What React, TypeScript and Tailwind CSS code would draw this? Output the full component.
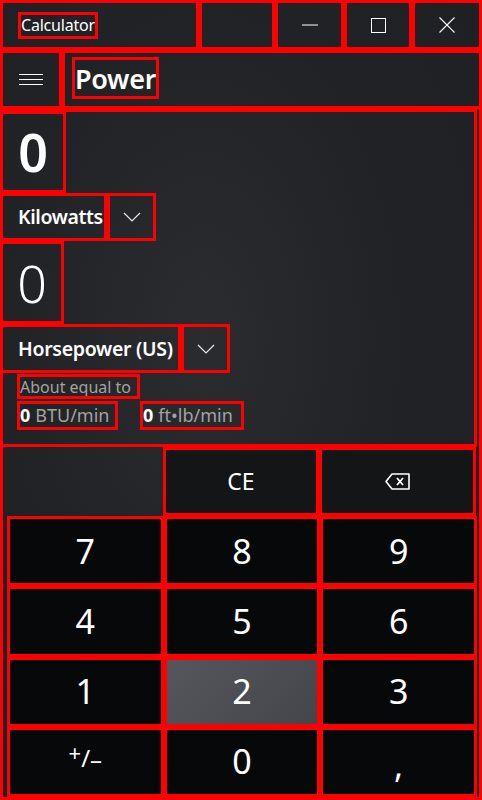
import React from "react";

// red debug-style frame drawn inside each box
const R = "outline-3 outline-[#ff0000] -outline-offset-3";

function Chevron() {
  return (
    <svg width="18" height="10" viewBox="0 0 18 10" fill="none">
      <polyline points="1,1 9,9 17,1" stroke="#e8e8e8" strokeWidth="1.2" />
    </svg>
  );
}

function Key({ label, hot }: { label: React.ReactNode; hot?: boolean }) {
  return (
    <div
      className={`${R} flex items-center justify-center text-[34px] text-white ${
        hot
          ? "bg-[linear-gradient(135deg,#56575c,#44454a)]"
          : "bg-[#070809]"
      }`}
    >
      {label}
    </div>
  );
}

export default function App() {
  return (
    <div
      className={`${R} w-[482px] h-[800px] flex flex-col overflow-hidden text-white font-['Noto_Sans',sans-serif] bg-[radial-gradient(ellipse_at_42%_42%,#2b2c30_0%,#222327_45%,#1e1f22_100%)]`}
    >
      {/* title bar */}
      <div className="h-[50px] flex shrink-0">
        <div className={`${R} w-[199px] flex items-center pl-[18px]`}>
          <span className={`${R} h-[27px] px-[3px] flex items-center text-[16px] tracking-[-0.2px] leading-none`}>
            Calculator
          </span>
        </div>
        <div className={`${R} w-[76px]`} />
        <div className={`${R} w-[69px] flex items-center justify-center`}>
          <svg width="16" height="2" viewBox="0 0 16 2">
            <line x1="0" y1="1" x2="16" y2="1" stroke="#fff" strokeWidth="1" />
          </svg>
        </div>
        <div className={`${R} w-[68px] flex items-center justify-center`}>
          <svg width="15" height="15" viewBox="0 0 15 15" fill="none">
            <rect x="0.5" y="0.5" width="14" height="14" stroke="#fff" strokeWidth="1" />
          </svg>
        </div>
        <div className={`${R} flex-1 flex items-center justify-center`}>
          <svg width="16" height="16" viewBox="0 0 16 16" fill="none">
            <path d="M0.5 0.5 L15.5 15.5 M15.5 0.5 L0.5 15.5" stroke="#fff" strokeWidth="1.1" />
          </svg>
        </div>
      </div>

      {/* header */}
      <div className="h-[59px] flex shrink-0">
        <div className={`${R} w-[62px] flex items-center justify-center`}>
          <svg width="24" height="11" viewBox="0 0 24 11">
            <path d="M0 0.5H24M0 5.5H24M0 10.5H24" stroke="#fff" strokeWidth="1" />
          </svg>
        </div>
        <div className={`${R} flex-1 pl-[10px] pt-[7px]`}>
          <span className={`${R} inline-flex items-center h-[42px] px-[3px] text-[27px] font-semibold tracking-[-0.3px] leading-none`}>
            Power
          </span>
        </div>
      </div>

      {/* converter display */}
      <div className={`${R} h-[338px] mr-[5px] pt-[2px] flex flex-col items-start shrink-0`}>
        <div className={`${R} w-[66px] h-[82px] flex items-center justify-center text-[52px] font-semibold leading-none`}>
          0
        </div>
        <div className="h-[48px] flex">
          <div className={`${R} w-[107px] flex items-center pl-[18px] text-[19.5px] font-semibold tracking-[-0.4px] whitespace-nowrap`}>
            Kilowatts
          </div>
          <div className={`${R} w-[49px] flex items-center justify-center`}>
            <Chevron />
          </div>
        </div>
        <div className={`${R} w-[64px] h-[83px] flex items-center justify-center text-[52px] font-light leading-none`}>
          0
        </div>
        <div className="h-[49px] flex">
          <div className={`${R} w-[181px] flex items-center pl-[18px] text-[19.5px] font-semibold tracking-[-0.3px] whitespace-nowrap`}>
            Horsepower (US)
          </div>
          <div className={`${R} w-[49px] flex items-center justify-center`}>
            <Chevron />
          </div>
        </div>
        <div className={`${R} ml-[17px] mt-[1px] h-[25px] w-[123px] px-[3px] flex items-center text-[16px] text-[#a3a3a3] whitespace-nowrap`}>
          About equal to
        </div>
        <div className="ml-[17px] mt-[2px] flex gap-[22px]">
          <div className={`${R} h-[29px] w-[101px] px-[3px] flex items-center text-[18px] text-[#a3a3a3] whitespace-nowrap`}>
            <span className="text-white font-bold mr-[5px]">0</span>BTU/min
          </div>
          <div className={`${R} h-[29px] w-[104px] px-[3px] flex items-center text-[18px] text-[#a3a3a3] whitespace-nowrap`}>
            <span className="text-white font-bold mr-[5px]">0</span>ft•lb/min
          </div>
        </div>
      </div>

      {/* clear / backspace */}
      <div className="h-[69px] flex shrink-0">
        <div className="w-[163px]" />
        <div className={`${R} w-[156px] bg-[#141517] flex items-center justify-center text-[23px]`}>
          CE
        </div>
        <div className={`${R} w-[157px] bg-[#141517] flex items-center justify-center`}>
          <svg width="25" height="17" viewBox="0 0 25 17" fill="none">
            <path d="M7 1H24V16H7L1 8.5Z" stroke="#fff" strokeWidth="1.6" strokeLinejoin="round" />
            <path d="M12 5L18 12M18 5L12 12" stroke="#fff" strokeWidth="1.8" />
          </svg>
        </div>
      </div>

      {/* keypad */}
      <div className={`${R} h-[281px] w-[470px] ml-[7px] grid grid-cols-3 grid-rows-4 shrink-0`}>
        {["7", "8", "9", "4", "5", "6", "1"].map((k) => (
          <Key key={k} label={k} />
        ))}
        <Key label="2" hot />
        <Key label="3" />
        <Key
          label={
            <span className="relative -top-[4px] text-[24px] leading-none">
              <span className="relative -top-[6px] text-[22px]">+</span>
              <span>/</span>
              <span className="relative top-[1px]">–</span>
            </span>
          }
        />
        <Key label="0" />
        <Key label={<span className="relative top-[4px]">,</span>} />
      </div>
    </div>
  );
}
